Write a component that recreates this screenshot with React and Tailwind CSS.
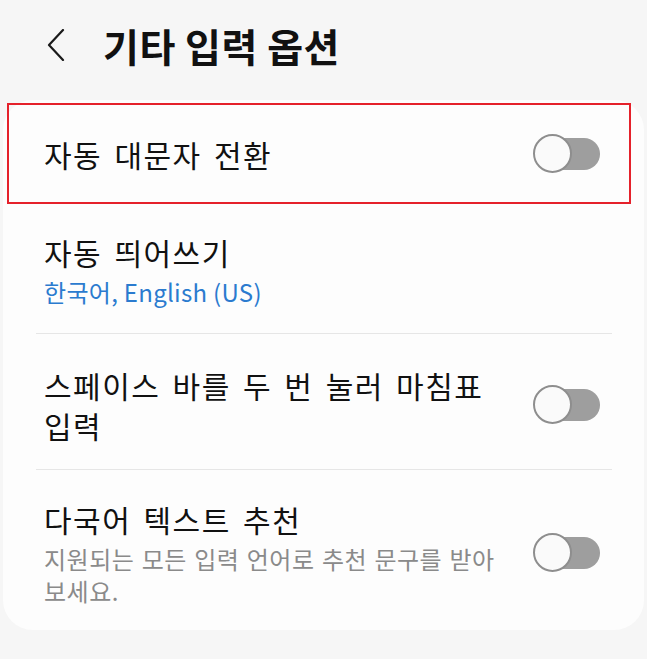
import React from 'react';

const Toggle = () => (
  <div className="relative w-[67px] h-[40px] shrink-0">
    <div className="absolute left-[12px] right-0 top-[4px] h-[32px] rounded-full bg-[#9e9e9e]" />
    <div className="absolute left-0 top-0 w-[39px] h-[39px] rounded-full bg-[#fafafa] border-2 border-[#8e8e8e]" />
  </div>
);

const Divider = () => <div className="h-px bg-[#e6e6e6] ml-[33px] mr-[32px]" />;

// row titles are a bit wider-set than Noto's defaults
const titleCls = 'text-[30px] leading-[40px] tracking-[1.5px] [word-spacing:4px] whitespace-nowrap';

export default function App() {
  return (
    <div
      className="w-[647px] h-[659px] bg-[#f6f6f6] overflow-hidden text-[#111]"
      style={{ fontFamily: '"Noto Sans CJK KR", "Noto Sans", sans-serif' }}
    >
      {/* header */}
      <div className="h-[100px] flex items-center pl-[47px] pb-[10px]">
        <svg width="18" height="32" viewBox="0 0 18 32" className="shrink-0">
          <path d="M16 1 L2 16 L16 31" fill="none" stroke="#1a1a1a" strokeWidth="2.2" strokeLinecap="round" strokeLinejoin="round" />
        </svg>
        <h1 className="ml-[38px] text-[39px] font-bold leading-none tracking-[0.5px]">기타 입력 옵션</h1>
      </div>

      {/* card */}
      <div className="mx-[3px] bg-[#fdfdfd] rounded-[30px] pt-[3px]">
        <div className="ml-[4px] mr-[13px] h-[101px] border-2 border-[#e5212b] flex items-center justify-between pl-[35px] pr-[29px]">
          <span className={titleCls}>자동 대문자 전환</span>
          <Toggle />
        </div>

        <div className="pl-[41px] pr-[44px] pt-[28px] pb-[25px]">
          <div className={titleCls}>자동 띄어쓰기</div>
          <div className="mt-[4px] text-[24px] leading-[32px] tracking-[0.3px] text-[#2b7bcf]">한국어, English (US)</div>
        </div>

        <Divider />

        <div className="flex items-center justify-between pl-[41px] pr-[44px] pt-[31px] pb-[24px]">
          <div className={titleCls}>
            스페이스 바를 두 번 눌러 마침표
            <br />
            입력
          </div>
          <Toggle />
        </div>

        <Divider />

        <div className="flex items-center justify-between pl-[41px] pr-[44px] pt-[29px] pb-[23px]">
          <div>
            <div className={titleCls}>다국어 텍스트 추천</div>
            <div className="mt-[4px] text-[24px] leading-[32px] tracking-[0.5px] [word-spacing:1.5px] whitespace-nowrap text-[#8a8a8a]">
              지원되는 모든 입력 언어로 추천 문구를 받아
              <br />
              보세요.
            </div>
          </div>
          <Toggle />
        </div>
      </div>
    </div>
  );
}
